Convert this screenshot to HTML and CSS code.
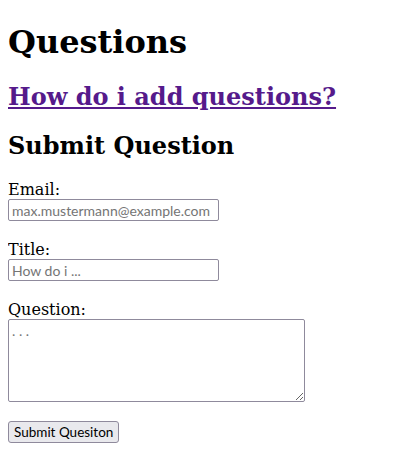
FILE: index.html
```html
<!DOCTYPE html>
<html>
<head>
<meta charset="utf-8">
<title>Questions</title>
<link rel="stylesheet" href="styles.css">
</head>
<body class="page">
<h1 class="title">Questions</h1>
<h2 class="help"><a class="help-link" href="#">How do i add questions?</a></h2>
<h2 class="subtitle">Submit Question</h2>
<form class="form">
<label class="label" for="email">Email:</label><br>
<input class="field" id="email" type="text" placeholder="max.mustermann@example.com"><br><br>
<label class="label" for="title">Title:</label><br>
<input class="field" id="title" type="text" placeholder="How do i ..."><br><br>
<label class="label" for="question">Question:</label><br>
<textarea class="area" id="question" placeholder=". . ."></textarea><br><br>
<button class="submit" type="button">Submit Quesiton</button>
</form>
</body>
</html>
```
FILE: styles.css
```css
.page {
  margin: 8px;
  font-family: "DejaVu Serif", serif;
  font-size: 16px;
  color: #000;
  background: #fff;
}
.title {
  font-size: 32px;
  margin: 15px 0 21px;
}
.help, .subtitle {
  font-size: 24px;
  margin: 20px 0;
}
.help-link {
  color: #551a8b;
}
.form {
  margin: 0;
}
.field, .area {
  font-family: Lato, sans-serif;
  font-size: 14px;
  box-sizing: border-box;
  border: 1px solid #8f8a9c;
  border-radius: 2px;
  padding: 1px 3px;
}
.field {
  width: 211px;
  height: 22px;
  vertical-align: middle;
}
.area {
  width: 297px;
  height: 83px;
  padding: 2px 3px;
  vertical-align: top;
}
.submit {
  font-family: Lato, sans-serif;
  font-size: 13.5px;
  white-space: nowrap;
  box-sizing: border-box;
  height: 22px;
  padding: 1px 5px;
  border: 1px solid #8f8a9c;
  border-radius: 3px;
  background: #e9e9ed;
  color: #000;
  vertical-align: bottom;
}
```
